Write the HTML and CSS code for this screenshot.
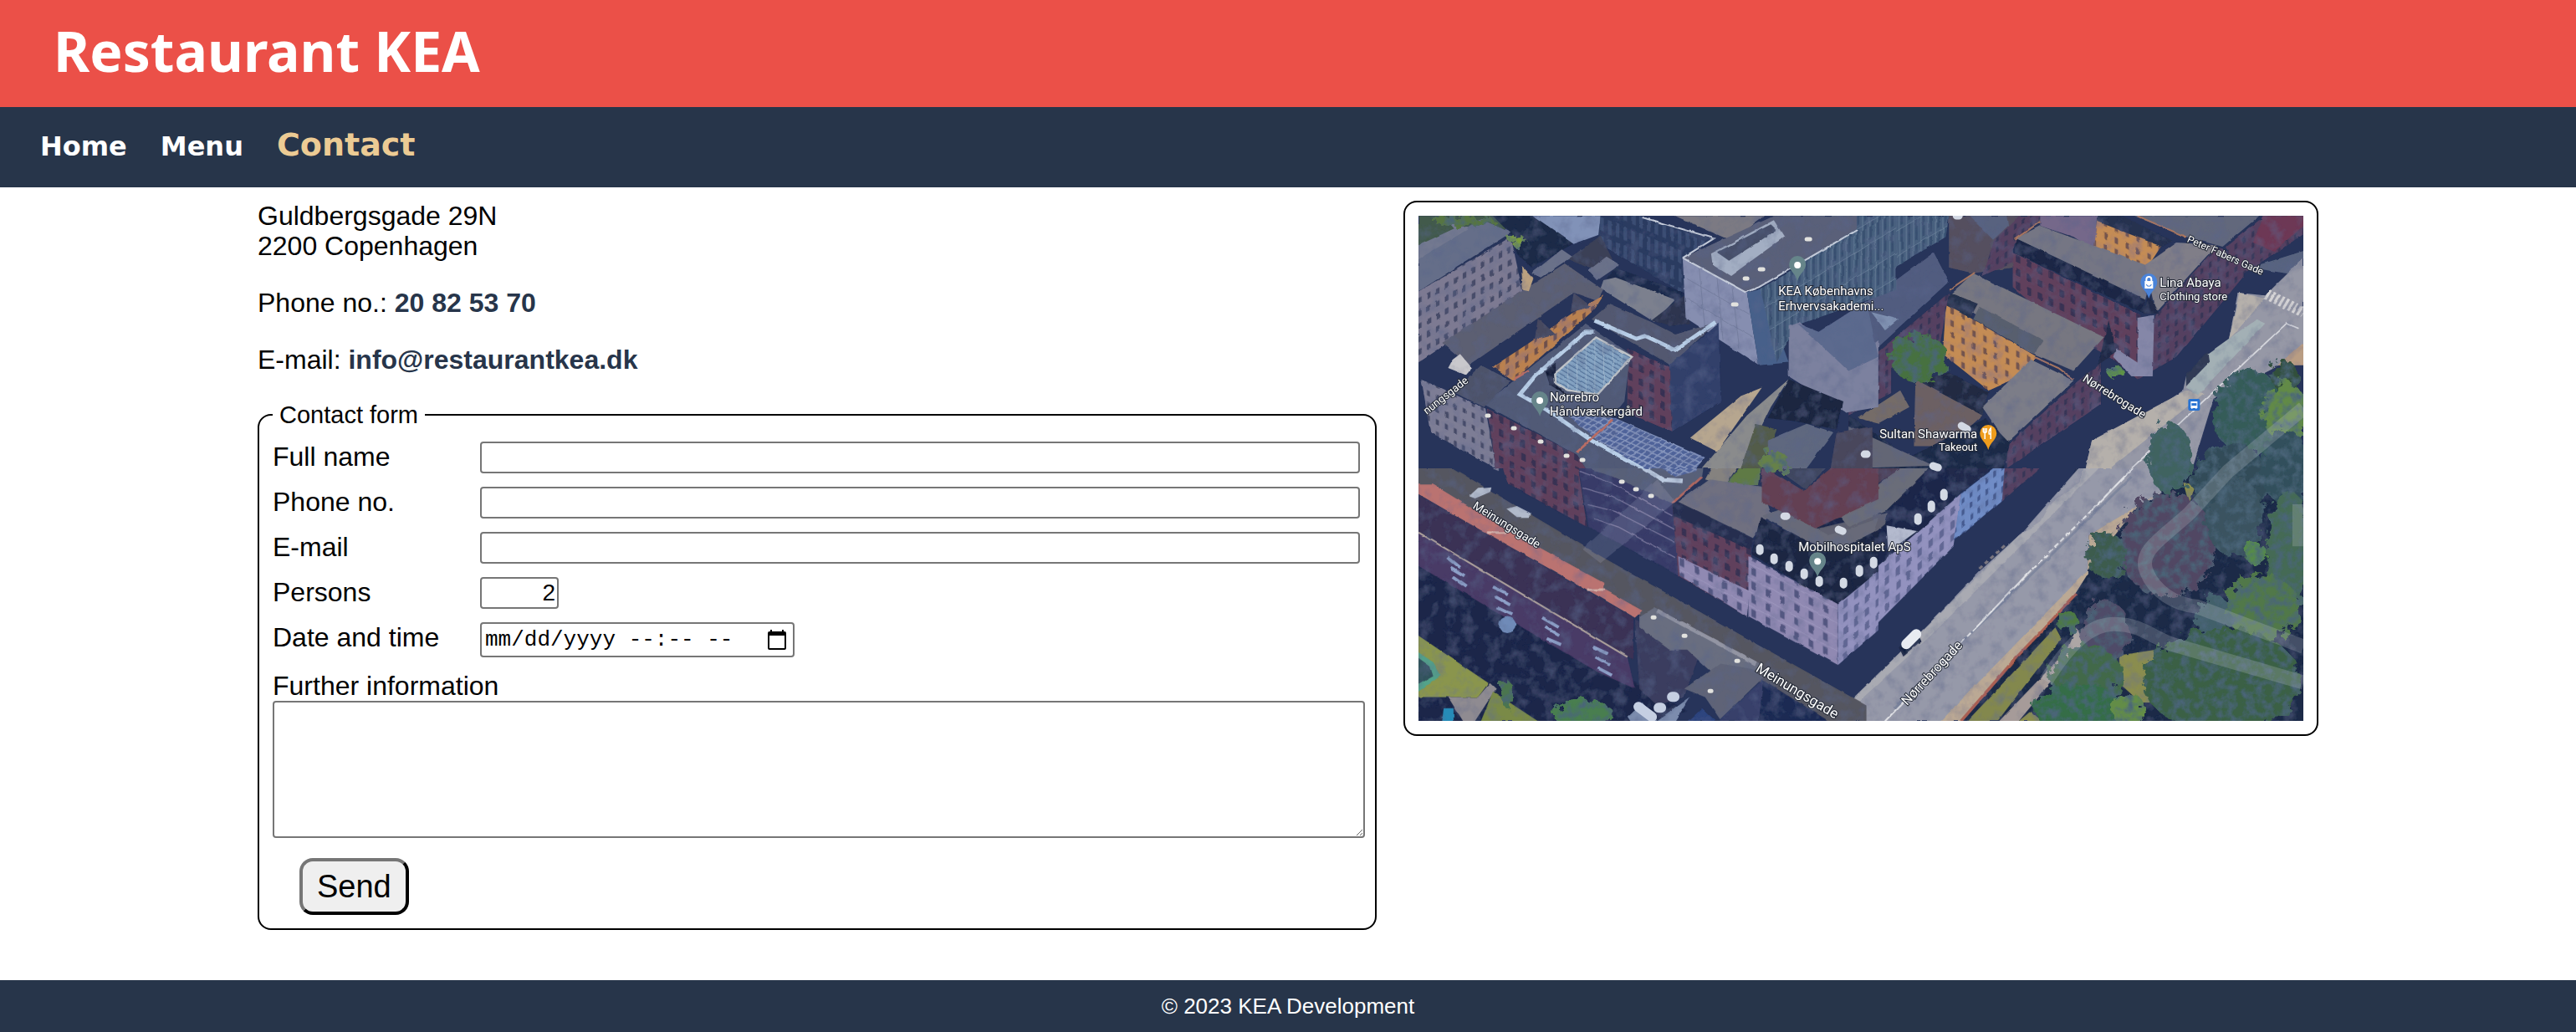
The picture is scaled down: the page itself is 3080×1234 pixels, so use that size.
FILE: index.html
```html
<!DOCTYPE html>
<html lang="en">
<head>
<meta charset="utf-8">
<meta name="viewport" content="width=device-width, initial-scale=1">
<title>Restaurant KEA - Contact</title>
<link rel="stylesheet" href="styles.css">
</head>
<body>
<header class="site-header"><h1>Restaurant KEA</h1></header>
<nav class="site-nav">
  <a href="index.html">Home</a>
  <a href="menu.html">Menu</a>
  <a href="contact.html" class="active">Contact</a>
</nav>
<main class="content">
  <section class="contact">
    <p>Guldbergsgade 29N<br>2200 Copenhagen</p>
    <p>Phone no.: <a href="tel:20825370">20 82 53 70</a></p>
    <p>E-mail: <a href="mailto:info@restaurantkea.dk">info@restaurantkea.dk</a></p>
    <form>
      <fieldset class="panel">
        <legend>Contact form</legend>
        <div class="fields">
          <label for="name">Full name</label>
          <input type="text" id="name">
          <label for="phone">Phone no.</label>
          <input type="tel" id="phone">
          <label for="email">E-mail</label>
          <input type="email" id="email">
          <label for="persons">Persons</label>
          <input type="number" id="persons" value="2">
          <label for="date">Date and time</label>
          <div class="date-field">
            <input type="text" id="date" placeholder="mm/dd/yyyy --:-- --">
            <button type="button" class="picker" aria-label="Show date and time picker">
              <svg viewBox="0 0 22 24" width="22" height="24"><path d="M3 0h2v2h12V0h2v2h1a2 2 0 0 1 2 2v18a2 2 0 0 1-2 2H2a2 2 0 0 1-2-2V4a2 2 0 0 1 2-2h1zM2 7v15h18V7z" fill-rule="evenodd"/></svg>
            </button>
          </div>
        </div>
        <label for="info">Further information</label>
        <textarea id="info"></textarea>
        <button type="submit" class="send">Send</button>
      </fieldset>
    </form>
  </section>
  <aside class="map panel">
    <svg viewBox="0 0 1058 604" role="img" aria-label="Aerial map of Guldbergsgade">
      <defs>
        <pattern id="greyDown" width="30" height="44" patternUnits="userSpaceOnUse" patternTransform="skewY(28)"><rect width="30" height="44" fill="#7d7d95"/><rect x="9" y="10" width="10" height="19" fill="#454a66"/></pattern>
        <pattern id="greyUp" width="30" height="46" patternUnits="userSpaceOnUse" patternTransform="skewY(-31)"><rect width="30" height="46" fill="#7d7a92"/><rect x="9" y="10" width="12" height="21" fill="#464b67"/></pattern>
        <pattern id="lilacDown" width="48" height="50" patternUnits="userSpaceOnUse" patternTransform="skewY(29)"><rect width="48" height="50" fill="#9089b2"/><rect x="15" y="10" width="15" height="27" fill="#535680"/><path d="M0 2H48" stroke="#a49dc4" stroke-width="2"/></pattern>
        <pattern id="lilacUp" width="36" height="48" patternUnits="userSpaceOnUse" patternTransform="skewY(-43)"><rect width="36" height="48" fill="#9392bf"/><rect x="11" y="8" width="14" height="27" fill="#626794"/></pattern>
        <pattern id="blueUp" width="26" height="40" patternUnits="userSpaceOnUse" patternTransform="skewY(-43)"><rect width="26" height="40" fill="#6f8cc6"/><rect x="8" y="8" width="9" height="20" fill="#455a90"/></pattern>
        <pattern id="orangeUp" width="32" height="42" patternUnits="userSpaceOnUse" patternTransform="skewY(-38)"><rect width="32" height="42" fill="#ba814f"/><rect x="9" y="8" width="11" height="22" fill="#6d4f4b"/></pattern>
        <pattern id="orangeDown" width="36" height="44" patternUnits="userSpaceOnUse" patternTransform="skewY(27)"><rect width="36" height="44" fill="#c48c54"/><rect x="11" y="8" width="11" height="22" fill="#75544b"/></pattern>
        <pattern id="redDown" width="36" height="48" patternUnits="userSpaceOnUse" patternTransform="skewY(28)"><rect width="36" height="48" fill="#61415c"/><rect x="10" y="8" width="15" height="26" fill="#393152"/></pattern>
        <pattern id="redUp" width="28" height="40" patternUnits="userSpaceOnUse" patternTransform="skewY(-38)"><rect width="28" height="40" fill="#544160"/><rect x="9" y="8" width="9" height="21" fill="#383657"/></pattern>
        <pattern id="glassUp" width="24" height="90" patternUnits="userSpaceOnUse" patternTransform="skewY(-33)"><rect width="24" height="90" fill="#48617f"/><rect x="3" width="8" height="78" fill="#385070"/><path d="M0 1H24M22 0V90" stroke="#7488a1" stroke-width="2"/></pattern>
        <pattern id="glassDown" width="26" height="68" patternUnits="userSpaceOnUse" patternTransform="skewY(24)"><rect width="26" height="68" fill="#2c3b60"/><rect x="7" y="6" width="12" height="48" fill="#3b4e73"/></pattern>
        <pattern id="solar" width="20" height="20" patternUnits="userSpaceOnUse" patternTransform="rotate(26) skewX(-25)"><rect width="20" height="20" fill="#8796bd"/><rect x="3" y="3" width="15" height="15" fill="#4f639a"/></pattern>
        <pattern id="skylight" width="30" height="17" patternUnits="userSpaceOnUse" patternTransform="skewY(32)"><rect width="30" height="17" fill="#84a3c2"/><path d="M0 15H30" stroke="#547199" stroke-width="4"/><path d="M1 0V17" stroke="#acbfd2" stroke-width="2"/></pattern>
        <filter id="leafy" x="-10%" y="-10%" width="120%" height="120%">
          <feTurbulence type="fractalNoise" baseFrequency=".09" numOctaves="4" seed="4" result="n"/>
          <feDisplacementMap in="SourceGraphic" in2="n" scale="22" result="shape"/>
          <feColorMatrix in="n" type="matrix" values="0 0 0 0 .07  0 0 0 0 .13  0 0 0 0 .19  2.4 0 0 0 -.95" result="shade"/>
          <feComposite in="shade" in2="shape" operator="in" result="spots"/>
          <feMerge><feMergeNode in="shape"/><feMergeNode in="spots"/></feMerge>
        </filter>
        <filter id="worn" x="0" y="0" width="100%" height="100%">
          <feTurbulence type="fractalNoise" baseFrequency=".06" numOctaves="4" seed="9" result="n"/>
          <feDisplacementMap in="SourceGraphic" in2="n" scale="3" xChannelSelector="R" yChannelSelector="G" result="shape"/>
          <feColorMatrix in="n" type="matrix" values="0 0 0 0 .1  0 0 0 0 .13  0 0 0 0 .26  1.1 0 0 0 -.5"/>
          <feComposite in2="shape" operator="in" result="dirt"/>
          <feMerge><feMergeNode in="shape"/><feMergeNode in="dirt"/></feMerge>
        </filter>
        <clipPath id="north"><rect width="1058" height="302"/></clipPath>
        <clipPath id="south"><rect y="302" width="1058" height="302"/></clipPath>
        <path id="pin" d="M0 0C-2-9-10-12-10-20A10 10 0 0 1 10-20C10-12 2-9 0 0Z"/>
      </defs>
      <rect width="1058" height="604" fill="#27345a"/>
      <g filter="url(#worn)">
      <!-- north-east blocks -->
      <g clip-path="url(#north)"><g transform="matrix(.3635 0 0 .3333 514 -38)">
        <path fill="url(#glassUp)" d="M-120 115H330L320 190 235 245 0 400-180 510Z"/>
        <path fill="#55505f" d="M330 115H650L545 215 540 300 410 320 330 300Z"/>
        <path fill="url(#redUp)" d="M480 200 560 115H640L545 215 540 280 440 330Z"/>
        <path fill="#59627f" d="M400 115H520L525 150 475 200Z"/>
        <path fill="#74688a" d="M630 115H820L810 240 740 190 630 150Z"/>
        <path fill="url(#orangeDown)" d="M820 130 1030 220 970 320 805 245Z"/>
        <path fill="#28324f" d="M820 115H900L1065 205 1030 225 820 135Z"/>
        <path fill="#62687c" d="M940 115H1350L1230 225 1110 190Z"/>
        <path fill="url(#redUp)" d="M1350 130 1496 115V180L1400 250 1300 320 1240 225Z"/>
        <path fill="#6d3955" d="M1365 115H1496V150L1400 240 1330 210Z"/>
        <path fill="#747684" d="M630 150 1000 300 975 420 550 195Z"/>
        <path fill="#1c2744" d="M550 195 975 415V465L550 250Z"/>
        <path fill="url(#redDown)" d="M540 245 960 470 950 700 860 620 720 540 540 370Z"/>
        <path fill="#807e88" d="M975 290 1080 210 1210 220 1010 460Z"/>
        <path fill="url(#redUp)" d="M1010 470 1210 225 1300 260V330L1080 620 950 700Z"/>
        <path fill="#8587a8" d="M950 480 1005 470 1000 690 930 690 870 620 880 590 950 640Z"/>
        <path fill="#202a46" d="M985 395 1020 465 970 465ZM855 490 880 600 820 650Z"/>
        <path fill="#58647f" d="M1320 300 1496 240V330Z"/>
        <!-- Nørrebrogade, upper part -->
        <path fill="#9698a6" d="M1496 265 1370 400 1280 390 1250 560 1110 690 1100 740 980 830 800 920 780 1020H1130L1200 770 1400 660 1496 600Z"/>
        <path fill="#b5b0ab" d="M1285 390 1370 410 1250 560ZM1110 740 800 920 780 1020 860 1020 1170 750Z"/>
        <path fill="#a3b0b5" d="M1180 610 1340 485 1370 500 1150 755 1110 730Z"/>
        <path fill="#303b55" d="M1180 600 1185 640 1110 725V680Z"/>
        <path stroke="#d8d9df" stroke-width="5" fill="none" d="M930 1020 1440 500 1480 518"/>
        <path stroke="#d5d4d6" stroke-width="38" stroke-dasharray="9 8" d="M1375 395 1496 460"/>
        <path fill="#b99d83" d="M1410 650 1496 570V650Z"/>
        <!-- orange house and its neighbours -->
        <path fill="url(#orangeDown)" d="M320 430 620 620 540 700 460 740 310 610Z"/>
        <path fill="#777781" d="M410 320 840 550 740 670 590 600 330 400Z"/>
        <path fill="#28314b" d="M335 390 425 430 400 480 320 435Z"/>
        <path fill="#585f6e" d="M430 440 640 560 610 610 410 485Z"/>
        <path fill="#515c7f" d="M0 470 280 245 330 350 170 510 0 680-180 600Z"/>
        <path fill="url(#redUp)" d="M0 690 330 390 300 580 140 660 140 750 0 830Z"/>
        <path fill="#8193b2" d="M75 460 165 485 120 525Z"/>
        <path fill="#222b43" d="M330 680 460 745 440 830 220 700Z"/>
        <path fill="#7c7d88" d="M600 630 740 705 520 930 440 800Z"/>
        <path fill="url(#redUp)" d="M520 940 750 710 830 640 830 790 520 1020Z"/>
        <path fill="#6c6064" d="M220 700 440 830 330 940 215 940Z"/>
        <path stroke="#a8765f" stroke-width="6" fill="none" d="M330 380 415 318M545 200 630 135M950 115 1110 190M610 620 690 660 740 700"/>
        <path fill="#1f2a47" d="M0 830 200 980 450 840 530 930 510 1020H0Z"/>
        <path fill="#646675" d="M0 870 280 1010 0 1020Z"/>
        <path fill="#756c68" d="M30 840 170 740 200 800 100 860Z"/>
      </g></g>
      <!-- north-west blocks -->
      <g clip-path="url(#north)"><g transform="matrix(.3571 0 0 .3333 -36 -38)">
        <path fill="#435a4c" d="M100 115H370L400 160 101 240Z"/>
        <path fill="#1b2946" d="M350 115H500L640 200 480 300 430 250 410 180Z"/>
        <path fill="#656e89" d="M101 260 310 125 410 175 101 385Z"/>
        <path fill="#737990" d="M195 130 270 160 101 270V220L220 160Z"/>
        <path fill="url(#greyUp)" d="M101 385 410 190 450 390 101 640Z"/>
        <path fill="#8192b8" d="M485 115H710V180L620 215Z"/>
        <path fill="url(#glassDown)" d="M710 115 840 115 1090 200 985 265 1000 400 700 210Z"/>
        <path fill="#7b7a83" d="M960 115H1260L1150 205Z"/>
        <path fill="#3b4057" d="M600 270 710 185 750 270 690 310Z"/>
        <path fill="#6b7189" d="M480 320 580 235 615 260 510 335ZM670 310 730 260 775 290 700 345Z"/>
        <path fill="#5c5e72" d="M180 570 590 285 720 380 700 420 620 390 270 650Z"/>
        <path fill="url(#orangeUp)" d="M350 655 500 550 620 460 720 400 690 450 420 705Z"/>
        <path fill="#47485f" d="M500 480 560 540 490 560ZM620 390 680 440 610 460Z"/>
        <path fill="#1e2b4b" d="M760 300 990 390 960 440 720 350Z"/>
        <path fill="#7c808e" d="M720 345 760 335 960 415 890 495 710 375Z"/>
        <path fill="#2e3650" d="M880 490 990 400 1010 500 940 510Z"/>
        <path fill="#5a6079" d="M985 265 1290 115H1568V160L1240 370 1200 390Z"/>
        <path fill="#868eb0" d="M985 265 1200 390 1240 650 1110 560 995 480Z"/>
        <path stroke="#6f7798" stroke-width="2" d="M1000 340 1210 470M1000 410 1220 550M1040 300 1060 520M1100 335 1120 560M1150 365 1175 590"/>
        <path fill="#47618a" d="M1200 390 1250 375 1340 640 1240 650Z"/>
        <path fill="url(#glassUp)" d="M1245 375 1700 100V380L1360 510 1300 640Z"/>
        <path fill="#a3aec3" d="M1080 250 1290 130 1325 190 1145 330 1085 290Z"/>
        <path fill="#465069" d="M1100 245 1280 145 1300 165 1140 275Z"/>
        <path stroke="#c5ccda" stroke-width="6" fill="none" d="M985 265 1090 195 850 120M985 265 1195 388 1240 370 1568 165"/>
        <!-- Håndværkergård -->
        <path fill="#53596f" d="M680 485 740 430 880 495 960 540 1100 495 945 650Z"/>
        <path fill="#33416b" d="M940 650 1105 500 1112 780 950 890Z"/>
        <path fill="url(#redDown)" d="M800 590 940 655 950 890 800 820Z"/>
        <path fill="#515a76" d="M320 790 660 500 810 610 790 780 700 900 860 1020H660L630 970Z"/>
        <path fill="#151e36" d="M525 670 560 640 560 720 600 760 540 720Z"/>
        <path fill="url(#skylight)" stroke="#c2c6ca" stroke-width="7" d="M558 680 695 550 815 620 700 755 600 740 560 715Z"/>
        <path stroke="#b9cfe8" stroke-width="14" fill="none" d="M690 530H660L490 690 440 755 530 810 680 920 860 1025M690 490 830 555 860 545 960 595 1095 495"/>
        <path fill="url(#solar)" d="M600 830 760 840 1060 980 1030 1020H860L700 920Z"/>
        <path stroke="#b96e65" stroke-width="8" fill="none" d="M750 845 630 960M420 700 470 670"/>
        <path fill="#4d536b" d="M215 745 310 650 410 705 320 800Z"/>
        <path fill="url(#greyDown)" d="M110 700 325 805 360 1020 140 890Z"/>
        <path fill="url(#redDown)" d="M330 805 630 970 660 1020H360Z"/>
        <path fill="#c9c8cc" d="M215 630 240 610 280 660 260 685 200 660Z"/>
        <!-- courtyard -->
        <path fill="#b6a68f" d="M1010 910 1180 760 1250 730 1100 960Z"/>
        <path fill="#8a8b8c" d="M1050 1020 1200 830 1340 700 1280 800 1180 1020Z"/>
        <path fill="#525b48" d="M1180 1020 1230 860 1300 880 1250 1020Z"/>
        <path fill="#7c819f" d="M1340 510 1380 495 1530 660 1640 560V800L1530 820 1340 690Z"/>
        <path fill="#5c6a8e" d="M1370 500 1440 530 1600 420 1640 620 1540 670Z"/>
        <path fill="#1b2641" d="M1340 700 1520 780 1500 880 1360 850 1270 840Z"/>
        <path fill="#5f687f" d="M1270 920 1400 860 1490 890 1400 1020H1270Z"/>
        <path fill="#48465c" d="M1500 890 1620 870V1020H1480Z"/>
        <path fill="#bba280" d="M445 295 485 340 470 385 450 380Z"/>
      </g></g>
      <!-- south-east: Nørrebrogade and the park -->
      <g clip-path="url(#south)"><g transform="matrix(.3635 0 0 .3333 514 292)">
        <path fill="#1b2947" d="M760 0H1500V940H370Z"/>
        <path fill="#9699a9" d="M780 0H980L1030 120 790 270 785 410 745 480 370 940H0V880L270 580 430 400 570 260Z"/>
        <path fill="#a9aab2" d="M780 0H850L270 630 0 900V870L300 550 560 270 630 220 660 160 760 80Z"/>
        <path fill="#bba994" d="M1025 115 940 180 790 390 300 940H370L745 480 785 410 790 270Z"/>
        <path stroke="#7f879e" stroke-width="8" d="M930 60 150 890"/>
        <path stroke="#e3e4e8" stroke-width="6" fill="none" d="M960 0 800 180M600 395 420 600M370 655 120 936"/>
        <path stroke="#e3e4e8" stroke-width="6" stroke-dasharray="18 9" d="M800 180 600 395M420 600 370 655"/>
        <path stroke="#ab5f51" stroke-width="10" d="M750 480 550 710 370 936"/>
        <path fill="#83884e" d="M390 936 560 740 680 600 700 640 600 780 490 936Z"/>
        <path fill="#a69b99" d="M495 936 720 680 750 600 775 650 560 936Z"/>
        <path fill="#8a8d50" d="M890 700 1010 680 1000 870 960 870 890 800ZM1100 80 1140 90 1120 160ZM560 936 600 900 640 936Z"/>
        <path fill="#1d2848" d="M-200 250 300-10 370 115 230 260 0 470-120 510Z"/>
        <path fill="#5e606f" d="M-160 260 80 200 130 190 120 230-160 480Z"/>
        <path fill="#6b6d79" d="M-30 200 210-10H300L120 185 0 240Z"/>
        <path fill="#4e3b4d" d="M-60 20 90 0 200 10 60 110-20 100Z"/>
        <path fill="url(#lilacUp)" d="M-10 480 230 255 370 120 345 310 0 690Z"/>
        <path fill="url(#blueUp)" d="M370 120 515 0 510 140 345 290Z"/>
        <path fill="url(#redUp)" d="M515 0H660L505 145Z"/>
        <path fill="#222c4b" d="M310 10 340 0H510L370 115Z"/>
        <path fill="#b4bace" d="M125 235 225 255 130 330Z"/>
        <path fill="#18213d" d="M165 670 220 610 240 650 180 705Z"/>
        <path stroke="#b9a99b" stroke-width="9" stroke-dasharray="14 12" opacity=".6" d="M430 390 520 300"/>
      </g></g>
      <!-- south-west: Meinungsgade -->
      <g clip-path="url(#south)"><g transform="matrix(.3571 0 0 .3333 -36 292)">
        <path fill="#1d284a" d="M101 360 1000 900 900 940H101Z"/>
        <path fill="#555660" d="M101 0H170L720 350 1600 880V940H1480L850 560 101 90Z"/>
        <path fill="url(#greyDown)" d="M260-10H370V40Z"/>
        <path fill="url(#redDown)" d="M370-10H630L665 240 400 85Z"/>
        <path fill="#373b67" d="M630-10 660 15 955 155 975 415 670 240Z"/>
        <path stroke="#77749a" stroke-width="4" fill="none" d="M640 40 740 80 950 200M650 100 750 130 960 250M670 160 760 185 960 295M690 210 770 240 960 350"/>
        <path fill="#596078" d="M650-10H1060L1050 60 950 155 740 55 690 40Z"/>
        <path fill="url(#solar)" d="M860-10H1050L1030 40 960 60Z"/>
        <path stroke="#bccbe0" stroke-width="16" fill="none" d="M800-10 920 70 985 75"/>
        <path stroke="#b0685f" stroke-width="8" d="M1050 60 950 155"/>
        <path fill="#85827f" d="M1060 70 1100-10H1190L1130 90Z"/>
        <path fill="#5e7a45" d="M1130 90 1180 20 1250 0 1240 90Z"/>
        <path fill="url(#redDown)" d="M950 155 1215 290 1200 560 970 415Z"/>
        <path fill="#262e4f" d="M950 155 980 150 1225 285 1210 320 955 200Z"/>
        <path fill="#6f7080" d="M970 150 1075 70 1250 95 1280 190 1220 280Z"/>
        <path fill="url(#lilacDown)" d="M970 345 1210 470 1200 560 975 415Z"/>
        <path fill="#686b79" d="M1250 200 1330 170 1470 270 1640 210 1600 330 1400 290Z"/>
        <path fill="#1b2543" d="M1245 205 1400 290 1500 325 1640 250V460L1505 520 1215 340Z"/>
        <path fill="url(#lilacDown)" d="M1205 345 1505 517 1505 735 1205 560Z"/>
        <path fill="url(#lilacUp)" d="M1505 517 1640 400V610L1505 735Z"/>
        <path fill="#644152" d="M1250 20 1390 110 1480 30 1640 0V140L1430 245 1250 150Z"/>
        <path fill="#414761" d="M1270 10 1400-10H1500L1395 105Z"/>
        <path fill="#ba7371" d="M101 88H150L390 245 720 440V462L850 540 825 565 660 462 330 265 101 122Z"/>
        <path stroke="#d6b1a8" stroke-width="9" d="M330 260H395M665 465H725"/>
        <path fill="#3a3355" d="M101 125 820 565V715L800 705 101 260Z"/>
        <path fill="#483a66" d="M101 262 800 706 825 820 700 760 101 380Z"/>
        <path stroke="#b0a49e" stroke-width="6" d="M101 260 800 706"/>
        <path fill="#3a3d5e" d="M825 570 1040 700 990 850 900 880 840 820Z"/>
        <path fill="#696e80" d="M840 560 890 528 1245 730 1150 830 1000 680 940 680 840 600Z"/>
        <path stroke="#9395a3" stroke-width="14" d="M900 540 1230 730"/>
        <path fill="#5e6377" d="M990 820 1110 730 1220 750 1255 780 1110 930 1060 850Z"/>
        <path fill="#37406b" d="M1110 930 1255 785 1240 940H1110Z"/>
        <path fill="#2d447e" d="M1000 940 1050 890 1100 940Z"/>
        <path fill="#1f2b52" d="M1255 790 1480 940H1240Z"/>
        <path fill="#7b8cad" d="M800 920 850 870 900 936 1010 850 960 936H810Z"/>
        <path fill="#8a954d" d="M101 630 335 800 300 850H101Z"/>
        <path fill="#53a38a" d="M101 690 150 725 175 770 101 830Z"/>
        <path fill="#33525b" d="M101 710 140 740 150 775 101 805Z"/>
        <path fill="#8f8b91" d="M200 850 300 850 340 800 360 820 290 936H250Z"/>
        <path fill="#7a8a47" d="M350 830 500 936H310Z"/>
        <path fill="#288bb8" d="M185 890H218V936H180Z"/>
        <path stroke="#8ea1c9" stroke-width="11" d="M200 350 240 385M208 385 255 415M215 420 262 455M350 455 400 480M358 490 408 520M365 530 415 555M515 565 570 600M525 600 572 630M530 640 578 662M685 670 735 695M692 705 742 735M700 745 748 772"/>
        <circle cx="398" cy="590" r="28" fill="#6f8bb8"/>
        <path fill="#b1bacb" d="M270 130 300 100 345 95 340 115 290 138ZM395 175 430 165 475 190 470 205 430 205Z"/>
        <path fill="#c7cbe0" opacity=".17" d="M650 320 900 70 960 150 710 370Z"/>
      </g></g>
      </g>
      <!-- dormers and roof lights -->
      <path stroke="#d3d9e4" stroke-width="9" stroke-linecap="round" fill="none" d="M408 397v4M425 408v4M443 417v4M461 426v4M479 435v4M508 437v4M527 422v5M544 412v5M597 360v5M613 345v5M628 331v5M643 0h3M533 285h3M615 299l6 2M649 251l7 4M502 375l5 2M437 359h3"/>
      <path stroke="#e2e2de" stroke-width="5" stroke-linecap="round" d="M82 239h2M113 254h2M145 270h2M176 287h2M195 292h2M242 318h2M259 327h2M277 335h2M280 480h2M317 502h2M380 532h2M348 568h2M376 106h4M408 64h4M464 28h4M390 75h3"/>
      <path stroke="#c5cfe2" stroke-width="12" stroke-linecap="round" d="M263 587l16 12M303 575h3M287 588h3"/>
      <path stroke="#e8ebf1" stroke-width="12" stroke-linecap="round" d="M583 512 595 500"/>
      <!-- trees -->
      <g filter="url(#leafy)">
        <ellipse cx="598" cy="170" rx="34" ry="29" fill="#46713f"/>
        <ellipse cx="834" cy="188" rx="10" ry="8" fill="#5e9344"/>
        <ellipse cx="898" cy="290" rx="27" ry="42" fill="#3f6460"/>
        <ellipse cx="992" cy="235" rx="42" ry="52" fill="#345c58"/>
        <ellipse cx="1035" cy="192" rx="16" ry="20" fill="#33503b"/>
        <ellipse cx="1036" cy="235" rx="26" ry="36" fill="#628a46"/>
        <ellipse cx="970" cy="320" rx="46" ry="50" fill="#324b58"/>
        <ellipse cx="1036" cy="300" rx="30" ry="44" fill="#32505c"/>
        <ellipse cx="895" cy="394" rx="58" ry="62" fill="#514764"/>
        <ellipse cx="822" cy="406" rx="24" ry="28" fill="#3c5b4e"/>
        <ellipse cx="975" cy="360" rx="34" ry="48" fill="#3a5360"/>
        <ellipse cx="1040" cy="400" rx="26" ry="72" fill="#456a55"/>
        <ellipse cx="1000" cy="403" rx="14" ry="12" fill="#568b48"/>
        <ellipse cx="1008" cy="468" rx="45" ry="38" fill="#517849"/>
        <ellipse cx="950" cy="480" rx="20" ry="28" fill="#43616a"/>
        <ellipse cx="822" cy="496" rx="28" ry="36" fill="#504c68"/>
        <ellipse cx="775" cy="484" rx="13" ry="13" fill="#4d7943"/>
        <ellipse cx="960" cy="555" rx="94" ry="62" fill="#3a6144"/>
        <ellipse cx="798" cy="550" rx="44" ry="36" fill="#426949"/>
        <ellipse cx="788" cy="590" rx="52" ry="32" fill="#356d47"/>
        <ellipse cx="848" cy="590" rx="20" ry="20" fill="#638d46"/>
        <ellipse cx="197" cy="596" rx="36" ry="18" fill="#487e50"/>
        <ellipse cx="106" cy="572" rx="8" ry="16" fill="#4b7550"/>
        <ellipse cx="54" cy="6" rx="38" ry="7" fill="#567443"/>
        <ellipse cx="120" cy="31" rx="9" ry="7" fill="#7d9e3b"/>
        <ellipse cx="425" cy="294" rx="17" ry="14" fill="#66814a"/>
      </g>
      <!-- park paths -->
      <g fill="none" stroke="#c6c9cd" stroke-opacity=".24" stroke-width="17">
        <path d="M1058 230 968 305 922 355C890 385 860 400 870 425S905 465 930 467L1058 515"/>
        <path d="M750 556C772 520 800 487 832 488S870 500 900 512L1058 558M1053 345V395"/>
      </g>
      <!-- street names -->
      <g class="street">
        <text transform="translate(10 238) rotate(-38)" font-size="13">nungsgade</text>
        <text transform="translate(64 349) rotate(32)" font-size="14">Meinungsgade</text>
        <text transform="translate(402 544) rotate(31)" font-size="17">Meinungsgade</text>
        <text transform="translate(584 586) rotate(-47)" font-size="16">Nørrebrogade</text>
        <text transform="translate(793 197) rotate(32)" font-size="14">Nørrebrogade</text>
        <text transform="translate(918 31) rotate(24)" font-size="12">Peter Fabers Gade</text>
      </g>
      <!-- places -->
      <g fill="#66858a">
        <use href="#pin" x="453" y="78"/><use href="#pin" x="145" y="240"/><use href="#pin" x="477" y="432"/>
      </g>
      <g fill="#fff"><circle cx="453" cy="59" r="4"/><circle cx="145" cy="221" r="4"/><circle cx="477" cy="413" r="4"/></g>
      <use href="#pin" x="873" y="99" fill="#4a83d9"/>
      <path fill="#fff" d="M868 78h10v9h-10z"/><path d="M870 78v-2a3 3 0 0 1 6 0v2" fill="none" stroke="#fff" stroke-width="2"/><path d="M870 82c1 3 5 3 6 0" fill="none" stroke="#4a83d9"/>
      <use href="#pin" x="681" y="280" fill="#ef9d1d"/>
      <path d="M677 254v5m2-5v5m-4-5v4q2 3 4 0m-2 1v8m7 0v-13q-3 3-2 7h2" fill="none" stroke="#fff" stroke-width="1.5"/>
      <rect x="920" y="219" width="14" height="14" rx="2" fill="#2873d2"/>
      <path fill="#fff" d="M923 222h8v8h-1v1h-1v-1h-4v1h-1v-1h-1z"/><path fill="#2873d2" d="M924 224h6v3h-6z"/>
      <g class="place">
        <text x="430" y="95">KEA Københavns</text>
        <text x="430" y="113">Erhvervsakademi...</text>
        <text x="157" y="222">Nørrebro</text>
        <text x="157" y="239">Håndværkergård</text>
        <text x="886" y="85">Lina Abaya</text>
        <text x="886" y="101" class="kind">Clothing store</text>
        <text x="668" y="266" text-anchor="end">Sultan Shawarma</text>
        <text x="668" y="281" text-anchor="end" class="kind">Takeout</text>
        <text x="454" y="401">Mobilhospitalet ApS</text>
      </g>
    </svg>
  </aside>
</main>
<footer class="site-footer">© 2023 KEA Development</footer>
</body>
</html>
```
FILE: styles.css
```css
* { box-sizing: border-box; }

body {
  margin: 0;
  background: #fff;
  color: #000;
  font: 32px/36px "Liberation Sans", Arial, sans-serif;
}

.site-header {
  padding: 20px 64px 28px;
  background: #eb5048;
  color: #fff;
}

.site-header h1 {
  margin: 0;
  font: bold 66px/80px "Noto Sans", "Open Sans", sans-serif;
}

.site-nav {
  display: flex;
  align-items: baseline;
  gap: 40px;
  padding: 23px 48px 25px;
  background: #27354a;
  font: bold 32px/48px "DejaVu Sans", Verdana, sans-serif;
}

.site-nav a {
  color: #fff;
  text-decoration: none;
}

.site-nav .active {
  color: #eccb94;
  font-size: 38px;
  line-height: 44px;
}

.content {
  display: grid;
  grid-template-columns: 11fr 9fr;
  align-items: start;
  gap: 32px;
  width: 80%;
  margin: 0 auto;
  padding: 16px 0 60px;
}

.contact p { margin: 0 0 32px; }

.contact a {
  color: #27354a;
  font-weight: bold;
  text-decoration: none;
}

.panel {
  margin: 0;
  border: 2px solid #000;
  border-radius: 16px;
  padding: 16px;
}

legend {
  padding: 0 8px;
  font-size: 29px;
  line-height: 32px;
}

.fields {
  display: grid;
  grid-template-columns: 232px 1fr;
  gap: 16px;
  margin-bottom: 16px;
  padding-right: 2px;
}

input,
textarea {
  border: 2px solid #767676;
  border-radius: 4px;
  padding: 2px;
  background: #fff;
  color: #000;
  font: 28px/30px "Liberation Sans", Arial, sans-serif;
}

input {
  width: 100%;
  height: 38px;
}

input[type="number"] {
  width: 94px;
  text-align: right;
  appearance: textfield;
}

input::-webkit-inner-spin-button {
  display: none;
}

.date-field {
  display: flex;
  align-items: center;
  width: 376px;
  height: 42px;
  border: 2px solid #767676;
  border-radius: 4px;
  padding: 0 8px 0 4px;
}

.date-field input {
  flex: 1;
  min-width: 0;
  border: 0;
  padding: 0;
  font: 26px/32px "Liberation Mono", monospace;
}

.date-field input::placeholder {
  color: #000;
}

.picker {
  display: flex;
  border: 0;
  padding: 0;
  background: none;
}

textarea {
  display: block;
  width: calc(100% + 4px);
  height: 164px;
}

.send {
  display: block;
  margin: 24px 0 0 32px;
  border: 4px outset #767676;
  border-color: #767676 #212121 #212121 #767676;
  border-radius: 16px;
  padding: 8px 17px;
  background: #efefef;
  color: #000;
  font: 38px/44px "Liberation Sans", Arial, sans-serif;
}

.map svg {
  display: block;
  width: 100%;
  height: auto;
}

.street,
.place {
  fill: #fff;
  stroke: #232936;
  stroke-width: 2px;
  paint-order: stroke;
  font-family: Roboto, sans-serif;
}

.place { font-size: 15px; }
.place .kind { font-size: 13px; }

.site-footer {
  padding: 16px;
  background: #27354a;
  color: #fff;
  font-size: 26px;
  line-height: 30px;
  text-align: center;
}
```
